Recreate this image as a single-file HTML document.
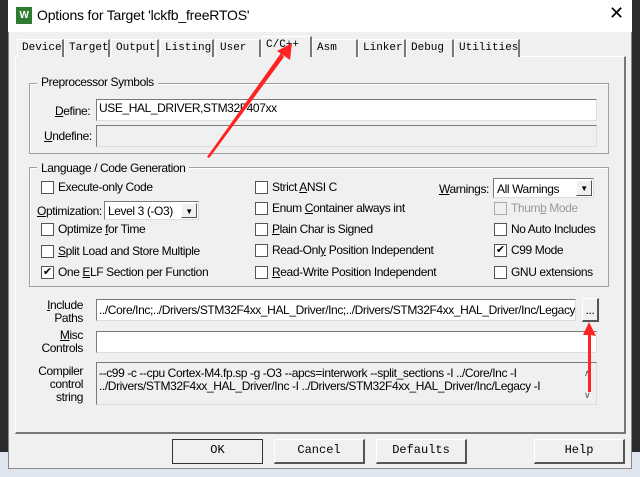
<!DOCTYPE html>
<html><head><meta charset="utf-8"><style>
*{box-sizing:border-box;margin:0;padding:0}
body{width:640px;height:477px;position:relative;overflow:hidden;background:#dfe6ee;font-family:"Liberation Sans",sans-serif;font-size:12px;letter-spacing:-0.4px;color:#000}
.a{position:absolute}
.dark{background:#2b2b2b}
.win{left:8px;top:0;width:624px;height:469px;background:#f0f0f0;border:1px solid #888}
.title{left:8px;top:0;width:624px;height:32px;background:#fff}
.tab{position:absolute;top:39px;height:18px;border:1px solid #fff;border-right:2px solid #777;border-bottom:none;background:#f0f0f0;font-family:"Liberation Mono",monospace;font-size:11px;letter-spacing:0;padding:2px 0 0 4px}
.panel{left:15px;top:56px;width:611px;height:378px;border:1px solid #fff;border-right:2px solid #777;border-bottom:2px solid #777}
.grp{border:1px solid #a0a0a0;box-shadow:1px 1px 0 #fff inset}
.gl{background:#f0f0f0;padding:0 4px}
.fld{background:#fff;border:1px solid #7a7a7a;border-right-color:#ddd;border-bottom-color:#ddd;padding:1px 2px;font-size:12px;white-space:nowrap;overflow:hidden}
.cb{position:absolute;width:13px;height:13px;background:#fff;border:1px solid #555;font-size:11px;line-height:11px;text-align:center;letter-spacing:0}
.lb{position:absolute;white-space:nowrap}
.btn{position:absolute;height:25px;border:1px solid #fff;border-right:2px solid #555;border-bottom:2px solid #555;background:#f0f0f0;font-family:"Liberation Mono",monospace;font-size:12px;letter-spacing:0;text-align:center;line-height:21px;top:439px}
.sel{background:#fff;border:1px solid #7a7a7a;border-right-color:#ddd;border-bottom-color:#ddd}
.dd{position:absolute;right:1px;top:1px;width:16px;bottom:1px;background:#f0f0f0;border:1px solid #fff;border-right-color:#555;border-bottom-color:#555;font-size:8px;text-align:center;line-height:15px}
u{text-decoration:underline}
</style></head><body>
<div class="a dark" style="left:0;top:0;width:8px;height:452px"></div>
<div class="a dark" style="left:632px;top:0;width:8px;height:452px"></div>
<div class="a win"></div>
<div class="a title"></div>
<div class="a" style="left:16px;top:7px;width:16px;height:17px;background:#2e7d32;color:#fff;font-size:10px;font-weight:bold;text-align:center;line-height:17px">W</div>
<div class="a" style="left:37px;top:7px;font-size:14px;letter-spacing:-0.2px">Options for Target 'lckfb_freeRTOS'</div>
<div class="a" style="left:609px;top:3px;font-size:18px;font-weight:300">✕</div>

<div class="a panel"></div>
<div class="tab" style="left:17px;width:47px">Device</div>
<div class="tab" style="left:64px;width:46px">Target</div>
<div class="tab" style="left:111px;width:48px">Output</div>
<div class="tab" style="left:160px;width:54px">Listing</div>
<div class="tab" style="left:215px;width:46px">User</div>
<div class="tab" style="left:261px;top:36px;height:21px;width:51px;border-right:2px solid #777">C/C++</div>
<div class="tab" style="left:312px;width:46px">Asm</div>
<div class="tab" style="left:358px;width:48px">Linker</div>
<div class="tab" style="left:406px;width:48px">Debug</div>
<div class="tab" style="left:454px;width:66px">Utilities</div>

<div class="a grp" style="left:29px;top:83px;width:580px;height:71px"></div>
<div class="a gl" style="left:37px;top:75px">Preprocessor Symbols</div>
<div class="lb" style="left:55px;top:104px"><u>D</u>efine:</div>
<div class="a fld" style="left:96px;top:99px;width:501px;height:22px">USE_HAL_DRIVER,STM32F407xx</div>
<div class="lb" style="left:44px;top:129px"><u>U</u>ndefine:</div>
<div class="a fld" style="left:96px;top:125px;width:501px;height:22px;background:#f0f0f0"></div>

<div class="a grp" style="left:29px;top:167px;width:580px;height:120px"></div>
<div class="a gl" style="left:37px;top:161px">Language / Code Generation</div>

<div class="cb" style="left:41px;top:181px"></div><div class="lb" style="left:58px;top:180px">Execute-only Code</div>
<div class="lb" style="left:37px;top:204px"><u>O</u>ptimization:</div>
<div class="a sel" style="left:104px;top:201px;width:95px;height:19px"><span style="position:absolute;left:3px;top:2px">Level 3 (-O3)</span><div class="dd">▼</div></div>
<div class="cb" style="left:41px;top:223px"></div><div class="lb" style="left:58px;top:222px">Optimize <u>f</u>or Time</div>
<div class="cb" style="left:41px;top:245px"></div><div class="lb" style="left:58px;top:244px"><u>S</u>plit Load and Store Multiple</div>
<div class="cb" style="left:41px;top:266px">✔</div><div class="lb" style="left:58px;top:265px">One <u>E</u>LF Section per Function</div>

<div class="cb" style="left:255px;top:181px"></div><div class="lb" style="left:272px;top:180px">Strict <u>A</u>NSI C</div>
<div class="cb" style="left:255px;top:202px"></div><div class="lb" style="left:272px;top:201px">Enum <u>C</u>ontainer always int</div>
<div class="cb" style="left:255px;top:223px"></div><div class="lb" style="left:272px;top:222px"><u>P</u>lain Char is Signed</div>
<div class="cb" style="left:255px;top:244px"></div><div class="lb" style="left:272px;top:243px">Read-Onl<u>y</u> Position Independent</div>
<div class="cb" style="left:255px;top:266px"></div><div class="lb" style="left:272px;top:265px"><u>R</u>ead-Write Position Independent</div>

<div class="lb" style="left:439px;top:182px"><u>W</u>arnings:</div>
<div class="a sel" style="left:493px;top:178px;width:101px;height:20px"><span style="position:absolute;left:3px;top:3px">All Warnings</span><div class="dd">▼</div></div>
<div class="cb" style="left:494px;top:202px;border-color:#aaa;background:#f0f0f0"></div><div class="lb" style="left:511px;top:201px;color:#999">Thum<u>b</u> Mode</div>
<div class="cb" style="left:494px;top:223px"></div><div class="lb" style="left:511px;top:222px">No Auto Includes</div>
<div class="cb" style="left:494px;top:244px">✔</div><div class="lb" style="left:511px;top:243px">C99 Mode</div>
<div class="cb" style="left:494px;top:266px"></div><div class="lb" style="left:511px;top:265px">GNU extensions</div>

<div class="lb" style="left:43px;top:299px;text-align:right;width:40px;line-height:13px"><u>I</u>nclude<br>Paths</div>
<div class="a fld" style="left:96px;top:299px;width:480px;height:22px;padding-top:3px">../Core/Inc;../Drivers/STM32F4xx_HAL_Driver/Inc;../Drivers/STM32F4xx_HAL_Driver/Inc/Legacy;</div>
<div class="a" style="left:582px;top:298px;width:17px;height:24px;border:1px solid #fff;border-right:2px solid #555;border-bottom:2px solid #555;text-align:center;line-height:22px">...</div>
<div class="lb" style="left:35px;top:329px;text-align:right;width:48px;line-height:13px"><u>M</u>isc<br>Controls</div>
<div class="a fld" style="left:96px;top:331px;width:501px;height:22px"></div>
<div class="lb" style="left:30px;top:365px;text-align:right;width:53px;line-height:13px">Compiler<br>control<br>string</div>
<div class="a fld" style="left:96px;top:362px;width:501px;height:43px;background:#f0f0f0;line-height:13px;padding-top:4px">--c99 -c --cpu Cortex-M4.fp.sp -g -O3 --apcs=interwork --split_sections -I ../Core/Inc -I<br>../Drivers/STM32F4xx_HAL_Driver/Inc -I ../Drivers/STM32F4xx_HAL_Driver/Inc/Legacy -I</div>
<div class="lb" style="left:584px;top:368px;font-size:9px;color:#555">∧</div>
<div class="lb" style="left:584px;top:390px;font-size:9px;color:#555">∨</div>

<div class="btn" style="left:172px;width:91px;border:1px solid #333">OK</div>
<div class="btn" style="left:274px;width:91px">Cancel</div>
<div class="btn" style="left:376px;width:91px">Defaults</div>
<div class="btn" style="left:534px;width:91px">Help</div>

<svg class="a" style="left:0;top:0" width="640" height="477">
<polygon points="207,157 209,158 283,55 290,60 292,43 277,51 283,55" fill="#f22"/>
<polygon points="207,157 210,157 284,57 281,53" fill="#f22"/>
<polygon points="588,392 591,392 591,335 596,336 589,322 583,335 588,335" fill="#f22"/>
</svg>
</body></html>
